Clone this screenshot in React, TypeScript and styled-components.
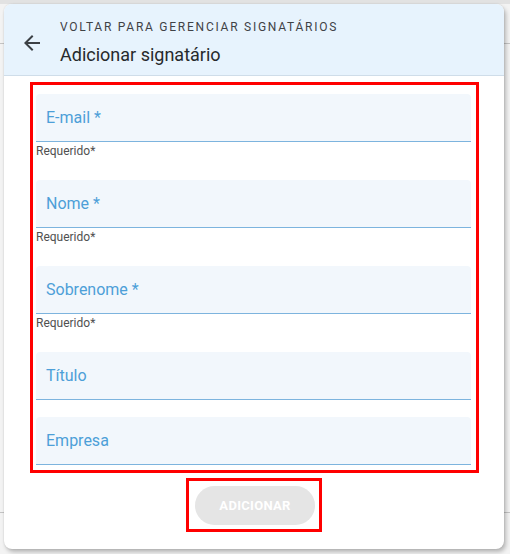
import React from 'react';
import styled, { createGlobalStyle } from 'styled-components';

const GlobalStyle = createGlobalStyle`
  html, body {
    margin: 0;
    padding: 0;
    background: #efefef;
    font-family: Roboto, "Liberation Sans", Arial, sans-serif;
  }
`;

const Backdrop = styled.div`
  width: 510px;
  height: 554px;
  box-sizing: border-box;
  padding: 4px 6px 5px 4px;
  background:
    linear-gradient(#c4c4c4, #c4c4c4) 0 43px / 100% 1px no-repeat,
    linear-gradient(#c4c4c4, #c4c4c4) 0 512px / 100% 1px no-repeat,
    linear-gradient(#e2e2e2, #e2e2e2) 0 0 / 100% 4px no-repeat,
    #f3f3f3;
  overflow: hidden;
`;

const Dialog = styled.div`
  height: 100%;
  background: #fff;
  border-radius: 8px;
  box-shadow: 2px 3px 4px rgba(0, 0, 0, 0.25), 0 0 2px rgba(0, 0, 0, 0.12);
  overflow: hidden;
  display: flex;
  flex-direction: column;
`;

const Header = styled.div`
  display: flex;
  align-items: center;
  height: 72px;
  box-sizing: border-box;
  padding: 0 0 0 16px;
  background: #e7f3fd;
  border-bottom: 1px solid #cfdde9;
`;

const BackButton = styled.button`
  width: 24px;
  height: 24px;
  padding: 0;
  margin: 6px 16px 0 0;
  border: none;
  background: none;
  color: #3c4045;
  cursor: pointer;
  svg {
    display: block;
  }
`;

const Titles = styled.div`
  display: flex;
  flex-direction: column;
  margin-top: 6px;
`;

const Overline = styled.div`
  font-size: 12px;
  line-height: 16px;
  letter-spacing: 1.75px;
  color: #3f4246;
  text-transform: uppercase;
`;

const Title = styled.div`
  font-size: 18px;
  line-height: 24px;
  margin-top: 8px;
  color: #26292c;
`;

const Body = styled.div`
  flex: 1;
  display: flex;
  flex-direction: column;
  align-items: flex-start;
  padding: 6px 0 16px 26px;
`;

const Highlight = styled.div`
  width: 449px;
  box-sizing: border-box;
  border: 3px solid #ff0000;
  padding: 9px 5px 5px 3px;
  display: flex;
  flex-direction: column;
`;

const Field = styled.div<{ $last?: boolean }>`
  margin-bottom: ${p => (p.$last ? '0' : '17px')};
`;

const Input = styled.div`
  height: 48px;
  box-sizing: border-box;
  background: #f2f7fc;
  border-radius: 4px 4px 0 0;
  border-bottom: 1px solid #7db4de;
  display: flex;
  align-items: center;
  padding-left: 10px;
  font-size: 16px;
  color: #4d9fd8;
`;

const Helper = styled.div`
  font-size: 12px;
  line-height: 14px;
  height: 21px;
  color: #505050;
  padding-top: 2px;
  box-sizing: border-box;
`;

const ButtonWrap = styled.div`
  align-self: center;
  margin: 5px 0 0 -26px;
  border: 3px solid #ff0000;
  padding: 5px 4px 4px 6px;
`;

const AddButton = styled.button`
  width: 120px;
  height: 39px;
  border: none;
  border-radius: 20px;
  background: #e5e5e5;
  color: #fff;
  font-family: Roboto, "Liberation Sans", Arial, sans-serif;
  font-size: 13px;
  font-weight: 700;
  letter-spacing: 0.3px;
  display: block;
`;

const fields = [
  { label: 'E-mail *', required: true },
  { label: 'Nome *', required: true },
  { label: 'Sobrenome *', required: true },
  { label: 'Título', required: false },
  { label: 'Empresa', required: false },
];

const ArrowBack = () => (
  <svg width="24" height="24" viewBox="0 0 24 24" fill="currentColor">
    <path d="M20 11H7.83l5.59-5.59L12 4l-8 8 8 8 1.41-1.41L7.83 13H20v-2z" />
  </svg>
);

export default function App() {
  return (
    <>
      <GlobalStyle />
      <Backdrop>
        <Dialog>
          <Header>
            <BackButton aria-label="Voltar">
              <ArrowBack />
            </BackButton>
            <Titles>
              <Overline>Voltar para gerenciar signatários</Overline>
              <Title>Adicionar signatário</Title>
            </Titles>
          </Header>
          <Body>
            <Highlight>
              {fields.map((f, i) => (
                <Field key={f.label} $last={i === fields.length - 1}>
                  <Input>{f.label}</Input>
                  {f.required && <Helper>Requerido*</Helper>}
                </Field>
              ))}
            </Highlight>
            <ButtonWrap>
              <AddButton disabled>ADICIONAR</AddButton>
            </ButtonWrap>
          </Body>
        </Dialog>
      </Backdrop>
    </>
  );
}
